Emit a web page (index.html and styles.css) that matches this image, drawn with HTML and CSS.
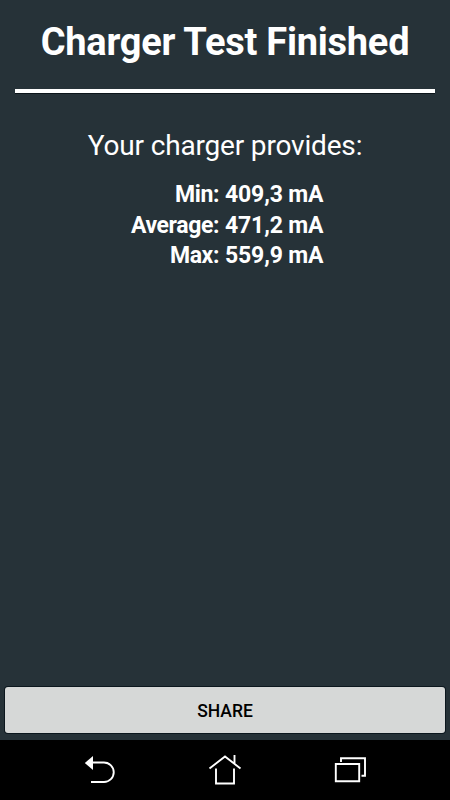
FILE: index.html
```html
<!DOCTYPE html>
<html lang="en">
<head>
    <meta charset="UTF-8">
    <meta name="viewport" content="width=device-width, initial-scale=1.0">
    <title>Charger Test</title>
    <link rel="stylesheet" href="styles.css">
</head>
<body>
    <main class="screen">
        <h1 class="title">Charger Test Finished</h1>
        <hr class="divider">
        <p class="subtitle">Your charger provides:</p>

        <div class="results">
            <span class="label">Min:</span><span>409,3 mA</span>
            <span class="label">Average:</span><span>471,2 mA</span>
            <span class="label">Max:</span><span>559,9 mA</span>
        </div>

        <button class="share">SHARE</button>
    </main>

    <nav class="navbar">
        <svg class="nav-icon" viewBox="0 0 50 50" aria-label="Back">
            <path d="M16 17.5H29A9.75 9.75 0 0 1 29 37H16"/>
            <path class="solid" d="M9.8 18L18 11V25Z"/>
        </svg>
        <svg class="nav-icon" viewBox="0 0 50 50" aria-label="Home">
            <path d="M9.5 23.5L25 11.5L40.5 23.5M34.5 10V18.5M16 23.5V38.5H34V23.5"/>
        </svg>
        <svg class="nav-icon" viewBox="0 0 50 50" aria-label="Recent apps">
            <path d="M10.8 19H34.2V36.2H10.8ZM16 17V13.3H40V30.7H36.5"/>
        </svg>
    </nav>
</body>
</html>
```
FILE: styles.css
```css
* { box-sizing: border-box; }
body {
    font-family: Roboto, "Noto Sans", sans-serif;
    background: #263238;
    color: #fff;
    margin: 0;
    height: 800px;
    display: flex;
    flex-direction: column;
    overflow: hidden;
}
.screen {
    flex: 1;
    display: flex;
    flex-direction: column;
    padding: 17px 5px 7px;
}
.title {
    margin: 0;
    font-size: 38px;
    letter-spacing: -0.25px;
    line-height: 50px;
    font-weight: 700;
    text-align: center;
    white-space: nowrap;
}
.divider {
    width: 420px;
    height: 4px;
    margin: 22px auto 0;
    border: none;
    background: #fff;
    box-shadow: 0 1px 0 #0c151a;
}
.subtitle {
    margin: 35px 0 0;
    font-size: 28px;
    letter-spacing: -0.17px;
    line-height: 36px;
    text-align: center;
}
.results {
    display: grid;
    grid-template-columns: 214px 1fr;
    column-gap: 6px;
    margin-top: 16px;
    font-size: 23px;
    letter-spacing: -0.15px;
    line-height: 30.5px;
    font-weight: 700;
}
.label {
    text-align: right;
    letter-spacing: -0.4px;
}
.share {
    height: 46px;
    margin-top: auto;
    padding: 1px 0 0;
    border: none;
    border-radius: 3px;
    background: #d6d8d7;
    box-shadow: 0 0 0 1px #0c171e;
    color: #000;
    font-family: inherit;
    font-size: 17.5px;
    font-weight: 500;
}
.navbar {
    height: 60px;
    padding: 5px 75px;
    display: flex;
    justify-content: space-between;
    background: #000;
}
.nav-icon {
    width: 50px;
    height: 50px;
    fill: none;
    stroke: #fff;
    stroke-width: 1.9;
}
.nav-icon .solid {
    fill: #fff;
    stroke: none;
}
```
